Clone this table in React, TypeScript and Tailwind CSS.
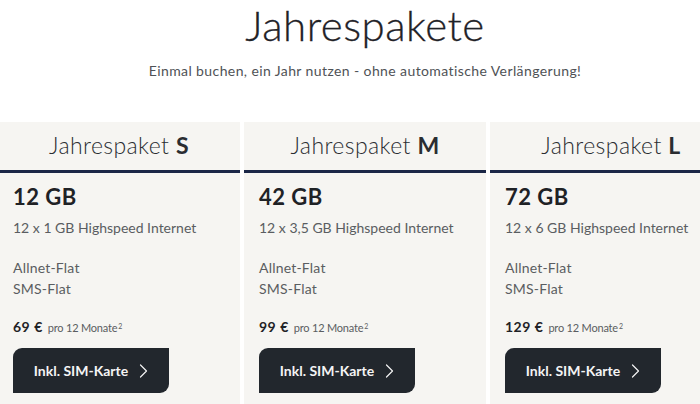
const packages = [
  { size: "S", gb: "12 GB", detail: "12 x 1 GB Highspeed Internet", price: "69 €" },
  { size: "M", gb: "42 GB", detail: "12 x 3,5 GB Highspeed Internet", price: "99 €" },
  { size: "L", gb: "72 GB", detail: "12 x 6 GB Highspeed Internet", price: "129 €" },
];

const Chevron = () => (
  <svg width="9" height="14" viewBox="0 0 9 14" fill="none" className="ml-[11px]">
    <path d="M1.5 1 L7.5 7 L1.5 13" stroke="#f2f2f2" strokeWidth="1.2" strokeLinecap="round" strokeLinejoin="round" />
  </svg>
);

const App = () => {
  return (
    <div className="w-[700px] h-[404px] overflow-hidden bg-white font-['Lato','Liberation_Sans',sans-serif]">
      <div className="w-[734px] -ml-[2px]">
        {/* Heading */}
        <div className="flex flex-col items-center">
          <h1 className="text-[42px] leading-[50px] font-light text-[#1f2227] tracking-[0.5px] [-webkit-text-stroke:0.3px_#1f2227]">Jahrespakete</h1>
          <p className="mt-[11px] text-[14px] leading-[20px] text-[#4f5256] tracking-[0.4px]">
            Einmal buchen, ein Jahr nutzen - ohne automatische Verlängerung!
          </p>
        </div>

        {/* Cards */}
        <div className="flex gap-1 mt-[41px]">
          {packages.map((p) => (
            <div key={p.size} className="w-[242px] shrink-0 bg-[#f6f5f2] h-[300px]">
              <div className="h-[48px] flex items-center justify-center pb-[1px] text-[23px] text-[#2a2d31] font-light tracking-[0.4px]">
                Jahrespaket&nbsp;<span className="font-bold">{p.size}</span>
              </div>
              <div className="h-[3px] bg-[#1b2747]" />
              <div className="px-[15px] pt-[10px]">
                <div className="text-[22px] leading-[28px] font-bold text-[#1f2226] tracking-[0.5px]">{p.gb}</div>
                <div className="mt-[7px] text-[14px] leading-[20px] text-[#5a5d61] tracking-[0px]">{p.detail}</div>
                <div className="mt-[19px] text-[14px] leading-[21px] text-[#5a5d61] tracking-[0.2px]">
                  <div>Allnet-Flat</div>
                  <div>SMS-Flat</div>
                </div>
                <div className="mt-[17px] flex items-baseline text-[#1f2226]">
                  <span className="text-[14px] font-bold tracking-[0.5px]">{p.price}</span>
                  <span className="ml-[5px] text-[11px] text-[#5a5d61] tracking-[-0.2px]">
                    pro 12 Monate<sup className="text-[7px] ml-[1px]">2</sup>
                  </span>
                </div>
                <button className="mt-[11px] w-[156px] h-[45px] bg-[#22272d] rounded-tl-[9px] rounded-br-[9px] flex items-center justify-center text-[#f4f4f4] text-[14px] font-bold tracking-[0px]">
                  Inkl. SIM-Karte
                  <Chevron />
                </button>
              </div>
            </div>
          ))}
        </div>
      </div>
    </div>
  );
};

export default App;
